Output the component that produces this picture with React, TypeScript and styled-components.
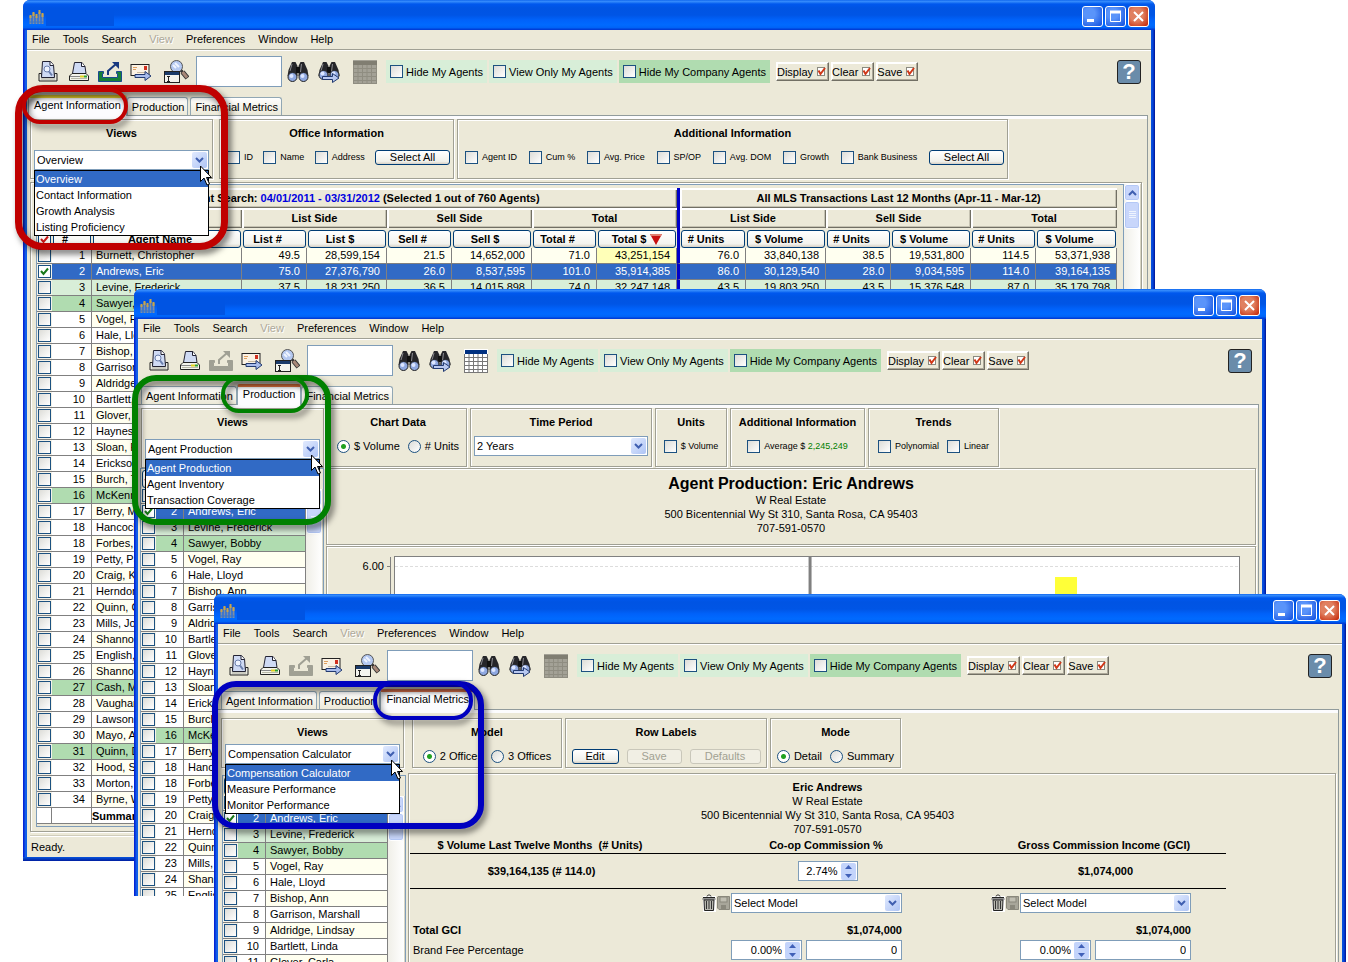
import React from "react";
import styled, { createGlobalStyle, css } from "styled-components";

const FACE = "#ece9d8";
const EDGE = "#a0a094";
const FIELD = "#7f9db9";
const PICK = "#316ac5";

const GlobalStyle = createGlobalStyle`
  * { box-sizing: border-box; }
  body {
    margin: 0;
    background: #fff;
    color: #000;
    font: 11px/14px "Liberation Sans", Arial, sans-serif;
  }
  button, input, select { font: inherit; color: inherit; margin: 0; }
  ul { list-style: none; margin: 0; padding: 0; }
  h2, h3, p { margin: 0; font-size: 11px; }
`;

/* ---------- canvas, windows and callouts ---------- */

const Canvas = styled.main`
  position: relative;
  height: 100vh;
  min-height: 900px;
  overflow: hidden;
`;

const Frame = styled.section<{ $x: number; $y: number; $right: number; $height?: string }>`
  position: absolute;
  left: ${(p) => p.$x}px;
  right: ${(p) => p.$right}px;
  top: ${(p) => p.$y}px;
  height: ${(p) => p.$height ?? "auto"};
  overflow: hidden;
  padding: 0 4px;
  border-radius: 7px 7px 0 0;
  background: linear-gradient(
    to right,
    #0019cf 0,
    #0831d9 1px,
    #166aee 3px,
    #0855dd 4px,
    #0855dd calc(100% - 4px),
    #0441d8 calc(100% - 2px),
    #001290 100%
  );
`;

const Client = styled.div`
  min-height: 100%;
  background: ${FACE};
`;

const BottomEdge = styled.div`
  height: 4px;
  margin: 0 -11px 0 -7px;
  background: linear-gradient(#0855dd, #001ea0);
`;

const TitleBar = styled.header`
  display: flex;
  align-items: center;
  height: 30px;
  margin: 0 -4px;
  padding: 3px 6px 0;
  background: linear-gradient(
    #0058e6 0,
    #3a8fff 1px,
    #2a82f8 2px,
    #0058ee 4px,
    #0054e3 8px,
    #0055e5 15px,
    #0062fa 20px,
    #006aff 25px,
    #0062f5 28px,
    #003dd7 29px
  );
`;

const TitleBlank = styled.span`
  width: 68px;
  height: 18px;
  margin-left: 1px;
  background: #0054e3;
`;

const Controls = styled.div`
  display: flex;
  gap: 2px;
  margin-left: auto;
`;

const ControlButton = styled.button<{ $close?: boolean }>`
  display: flex;
  width: 21px;
  height: 21px;
  padding: 0;
  border: 1px solid #fff;
  border-radius: 3px;
  background: ${(p) =>
    p.$close
      ? "radial-gradient(circle at 40% 40%, #e08060 40%, #c83010 90%)"
      : "radial-gradient(circle at 35% 35%, #5a94fa 30%, #1553e0 95%)"};
`;

const Callout = styled.div<{ $x: number; $y: number; $w: number; $h: number; $r: number; $t: number; $color: string }>`
  position: absolute;
  left: ${(p) => p.$x}px;
  top: ${(p) => p.$y}px;
  width: ${(p) => p.$w}px;
  height: ${(p) => p.$h}px;
  border: ${(p) => p.$t}px solid ${(p) => p.$color};
  border-radius: ${(p) => p.$r}px;
  filter: drop-shadow(3px 4px 3px rgba(0, 0, 0, 0.55));
  pointer-events: none;
`;

/* ---------- menu, toolbar and tabs ---------- */

const MenuBar = styled.nav`
  display: flex;
  gap: 13px;
  height: 20px;
  padding: 0 5px;
  border-bottom: 1px solid ${EDGE};
  box-shadow: 0 1px 0 #fff;
`;

const MenuItem = styled.button`
  padding: 0 0 2px;
  border: 0;
  background: none;
  &:disabled {
    color: #aca899;
    text-shadow: 1px 1px 0 #fff;
  }
`;

const Toolbar = styled.div`
  display: flex;
  align-items: center;
  height: 43px;
  padding: 0 10px 0 5px;
`;

const ToolButton = styled.button<{ $w?: number }>`
  display: flex;
  flex: none;
  align-items: center;
  justify-content: center;
  width: ${(p) => p.$w ?? 31}px;
  height: 28px;
  padding: 0;
  border: 0;
  background: none;
`;

const SearchBox = styled.input`
  width: 86px;
  height: 31px;
  border: 1px solid ${FIELD};
  background: #fff;
`;

const CheckPanel = styled.label<{ $strong?: boolean }>`
  display: flex;
  flex: none;
  align-items: center;
  gap: 3px;
  height: 23px;
  margin-right: 2px;
  padding: 0 4px;
  background: ${(p) => (p.$strong ? "#b0dcb0" : "#d8eed8")};
`;

const RaisedButton = styled.button`
  display: flex;
  flex: none;
  align-items: center;
  gap: 4px;
  height: 19px;
  margin-left: 2px;
  padding: 0 2px 0 0;
  border: 1px solid;
  border-color: #fff #716f64 #716f64 #fff;
  box-shadow: inset -1px -1px 0 #aca899, inset 1px 1px 0 #fff;
  background: ${FACE};
`;

const ButtonGroup = styled.div`
  display: flex;
  margin-left: 2px;
`;

const HelpButton = styled.button`
  width: 24px;
  height: 24px;
  margin-left: auto;
  padding: 0;
  border: 1px solid #222;
  border-radius: 3px;
  background: #6a8caa;
  color: #fff;
  font-size: 22px;
  font-weight: bold;
  line-height: 22px;
`;

const Tabs = styled.div`
  display: flex;
  align-items: flex-end;
  gap: 2px;
  height: 22px;
  padding: 0 3px;
`;

const Tab = styled.button<{ $active?: boolean; $top?: string }>`
  height: 18px;
  padding: 0 3px 0 4px;
  border: 1px solid #91a7b4;
  border-bottom: 0;
  border-radius: 3px 3px 0 0;
  background: linear-gradient(#fff, ${FACE});
  ${(p) =>
    p.$active &&
    css`
      position: relative;
      height: 21px;
      margin: 0 -2px -1px;
      padding: 0 5px 4px;
      border-top: 3px solid ${p.$top};
      background: #fcfcfe;
    `}
`;

const TabBody = styled.div`
  margin-right: 3px;
  padding: 3px 2px 0 3px;
  border: 1px solid #919b9c;
  border-width: 1px 1px 0 0;
  box-shadow: inset 0 3px 0 #fcfcfe;
`;

/* ---------- option groups ---------- */

const GroupRow = styled.div<{ $compact?: boolean }>`
  display: flex;
  gap: 3px;
  padding-top: ${(p) => (p.$compact ? 5 : 0)}px;
`;

const GroupBox = styled.fieldset<{ $w: number; $h: number; $gapAfter?: number }>`
  display: flex;
  flex: none;
  flex-direction: column;
  width: ${(p) => p.$w}px;
  height: ${(p) => p.$h}px;
  min-width: 0;
  margin: 0 ${(p) => p.$gapAfter ?? 0}px 0 0;
  padding: 6px 3px 0;
  border: 1px solid ${EDGE};
  box-shadow: 1px 1px 0 #fff, inset 1px 1px 0 #fff;
`;

const GroupTitle = styled.h3`
  text-align: center;
  line-height: 14px;
`;

const GroupContent = styled.div<{ $top: number; $spread?: boolean; $small?: boolean }>`
  display: flex;
  align-items: center;
  justify-content: ${(p) => (p.$spread ? "space-between" : "center")};
  gap: ${(p) => (p.$spread ? 0 : 8)}px;
  height: 20px;
  margin-top: ${(p) => p.$top}px;
  padding-left: ${(p) => (p.$spread ? 4 : 0)}px;
  font-size: ${(p) => (p.$small ? 9 : 11)}px;
  white-space: nowrap;
`;

const Choice = styled.label`
  display: flex;
  align-items: center;
  gap: 4px;
`;

const Green = styled.span`
  color: #008000;
`;

const CheckInput = styled.input.attrs({ type: "checkbox" })`
  appearance: none;
  display: block;
  flex: none;
  width: 13px;
  height: 13px;
  border: 1px solid #1c5180;
  background: linear-gradient(135deg, #dcdcd7, #fff);
  &:checked {
    background: #fff;
  }
`;

const RadioInput = styled.input.attrs({ type: "radio" })`
  appearance: none;
  flex: none;
  width: 13px;
  height: 13px;
  border: 1px solid #1c5180;
  border-radius: 50%;
  background: linear-gradient(135deg, #dcdcd7, #fff);
  &:checked {
    background: radial-gradient(circle, #21a121 0 2px, #fff 3px);
  }
`;

const PlainButton = styled.button<{ $w: number }>`
  flex: none;
  width: ${(p) => p.$w}px;
  height: 15px;
  padding: 0;
  border: 1px solid #003c74;
  border-radius: 3px;
  background: linear-gradient(#fff, #f0f0ea 80%, #d6d0c5);
  font-size: 11px;
  line-height: 12px;
  &:disabled {
    border-color: #c9c7ba;
    color: #a1a192;
    background: #f1efe4;
  }
`;

const ComboWrap = styled.div<{ $w?: number }>`
  position: relative;
  flex: none;
  width: ${(p) => (p.$w ? p.$w + "px" : "100%")};
  height: 20px;
`;

const ComboSelect = styled.select`
  appearance: none;
  display: block;
  width: 100%;
  height: 20px;
  padding: 0 20px 0 2px;
  border: 1px solid ${FIELD};
  border-radius: 0;
  background: #fff;
`;

const ArrowBox = styled.span`
  position: absolute;
  top: 2px;
  right: 2px;
  display: flex;
  align-items: center;
  justify-content: center;
  width: 15px;
  height: 16px;
  border-radius: 2px;
  background: linear-gradient(135deg, #e1eafe, #aec4f5);
  pointer-events: none;
`;

const Popup = styled.ul`
  position: absolute;
  z-index: 3;
  top: 20px;
  left: 0;
  right: 0;
  border: 1px solid #000;
  background: #fff;
`;

const PopupItem = styled.li<{ $on?: boolean }>`
  height: 16px;
  padding-left: 1px;
  line-height: 16px;
  color: ${(p) => (p.$on ? "#fff" : "#000")};
  background: ${(p) => (p.$on ? PICK : "#fff")};
`;

const Pointer = styled.svg`
  position: absolute;
  z-index: 4;
  right: -3px;
  top: 15px;
`;

/* ---------- tables ---------- */

const TableSection = styled.div`
  padding-top: 3px;
`;

const Pane = styled.div`
  margin-right: 3px;
  padding: 1px 0 4px 5px;
  border: 1px solid ${EDGE};
  box-shadow: 1px 1px 0 #fff, inset 1px 1px 0 #fff;
`;

const PaneInner = styled.div`
  display: flex;
`;

const TableFrame = styled.div`
  flex: 1;
  min-width: 0;
  overflow: hidden;
  padding: 3px 0 2px;
  border: 1px solid ${FIELD};
`;

const Grid = styled.table<{ $w: number }>`
  width: ${(p) => p.$w}px;
  table-layout: fixed;
  border-collapse: separate;
  border-spacing: 0;
`;

const dividerRule = css`
  border-left: 3px solid #0000c8;
`;

const BandHead = styled.th<{ $divider?: boolean }>`
  height: 20px;
  padding: 0;
  box-shadow: inset 2px 2px 0 #fff, inset -1px -1px 0 #716f64, inset -2px -2px 0 #c5c2b2;
  ${(p) => p.$divider && dividerRule}
`;

const DateRange = styled.span`
  color: #0000e0;
`;

const ColumnHead = styled.th<{ $divider?: boolean; $thin?: boolean }>`
  height: ${(p) => (p.$thin ? 19 : 20)}px;
  padding: ${(p) => (p.$thin ? 1 : 2)}px 1px 0;
  ${(p) => p.$divider && dividerRule}
`;

const SortButton = styled.button<{ $tight?: boolean }>`
  display: flex;
  align-items: center;
  justify-content: center;
  gap: 4px;
  width: 100%;
  height: 18px;
  padding: 0 ${(p) => (p.$tight ? 0 : 14)}px 0 0;
  border: 1px solid #003c74;
  border-radius: 3px;
  background: linear-gradient(#fff, #f3f3ee 80%, #d6d0c5);
  font-weight: bold;
  white-space: nowrap;
`;

type Tone = "ivory" | "plain" | "mine" | "company" | "picked";
const toneColor: Record<Tone, string> = {
  ivory: "#fffff0",
  plain: "#ffffff",
  mine: "#d8eed8",
  company: "#b0dcb0",
  picked: PICK,
};

const Row = styled.tr<{ $tone: Tone }>`
  background: ${(p) => toneColor[p.$tone]};
  color: ${(p) => (p.$tone === "picked" ? "#fff" : "#000")};
`;

const Cell = styled.td<{ $num?: boolean; $divider?: boolean; $fill?: string }>`
  height: 16px;
  padding: ${(p) => (p.$num ? "0 6px 0 0" : "0 0 0 4px")};
  border-right: 1px solid #808080;
  border-bottom: 1px solid #808080;
  line-height: 15px;
  text-align: ${(p) => (p.$num ? "right" : "left")};
  white-space: nowrap;
  overflow: hidden;
  background: ${(p) => p.$fill ?? "transparent"};
  ${(p) => p.$divider && dividerRule}
`;

const CheckCell = styled.td`
  height: 16px;
  padding: 0 0 0 1px;
  border-bottom: 1px solid #808080;
  background: #f4f2e8;
`;

const CheckMark = styled.svg`
  position: absolute;
  left: 2px;
  top: 2px;
  pointer-events: none;
`;

const CheckHolder = styled.div`
  position: relative;
  width: 13px;
`;

const SummaryCell = styled.td`
  height: 16px;
  padding: 0;
  border-right: 1px solid #808080;
  border-bottom: 1px solid #808080;
  background: #fff;
  font-weight: bold;
`;

const ScrollTrack = styled.div<{ $top?: number }>`
  display: flex;
  flex: none;
  flex-direction: column;
  width: 17px;
  margin-top: ${(p) => p.$top ?? 0}px;
  border-right: 1px solid #d8d5c4;
  background: linear-gradient(to right, #f0efe8, #fff);
`;

const ScrollUp = styled.button`
  display: flex;
  align-items: center;
  justify-content: center;
  width: 16px;
  height: 17px;
  padding: 0;
  border: 1px solid #fff;
  border-radius: 3px;
  background: #c8d6fb;
  box-shadow: inset 0 0 0 1px #b4c8f6;
`;

const ScrollThumb = styled.div`
  display: flex;
  align-items: center;
  justify-content: center;
  width: 16px;
  height: 28px;
  border: 1px solid #fff;
  border-radius: 3px;
  background: #c8d6fb;
  box-shadow: inset 0 0 0 1px #b4c8f6;
`;

const StatusBar = styled.footer`
  height: 22px;
  margin-top: 3px;
  padding: 4px 1px 0;
  border-top: 1px solid #d0cdbc;
  box-shadow: inset 0 1px 0 #fff;
`;

/* ---------- lower halves of the Production and Metrics windows ---------- */

const Split = styled.div<{ $top: number }>`
  display: flex;
  align-items: stretch;
  margin-top: ${(p) => p.$top}px;
`;

const ListFrame = styled.div<{ $inset?: boolean }>`
  display: flex;
  flex: none;
  width: 184px;
  margin: ${(p) => (p.$inset ? "2px 0 0 1px" : "0 0 0 -1px")};
  border: 1px solid ${FIELD};
  border-bottom: 0;
`;

const ListTableBox = styled.div`
  flex: 1;
`;

const RightColumn = styled.div`
  flex: 1;
  min-width: 0;
  margin-left: 2px;
`;

const EtchedBox = styled.div`
  border: 1px solid ${EDGE};
  box-shadow: 1px 1px 0 #fff, inset 1px 1px 0 #fff;
  & + & {
    margin-top: 1px;
  }
`;

const AgentHeading = styled.div`
  height: 75px;
  padding-top: 6px;
  text-align: center;
`;

const ChartTitle = styled.h2`
  font-size: 16px;
  line-height: 18px;
`;

const ChartArea = styled.div`
  display: flex;
  height: 420px;
  padding: 9px 15px 0 0;
`;

const AxisLabel = styled.div`
  width: 57px;
  padding-top: 3px;
  text-align: right;
`;

const AxisLine = styled.div`
  width: 4px;
  margin: 1px 3px 0 3px;
  border-right: 1px solid #808080;
  background: linear-gradient(#808080, #808080) 0 9px / 4px 1px no-repeat;
`;

const Plot = styled.svg`
  flex: 1;
  min-width: 0;
  height: 100%;
  border: 1px solid #808080;
  background: #fff;
`;

const MetricsBox = styled(EtchedBox)`
  height: 420px;
  padding: 6px 0 0 1px;
`;

const Metrics = styled.table`
  width: 816px;
  table-layout: fixed;
  border-collapse: separate;
  border-spacing: 0;
`;

const MetricCell = styled.td<{ $h: number; $ruled?: boolean; $align?: string; $padRight?: number; $padTop?: number }>`
  height: ${(p) => p.$h}px;
  padding: ${(p) => p.$padTop ?? 0}px ${(p) => p.$padRight ?? 0}px 0 3px;
  border-bottom: ${(p) => (p.$ruled ? "1px solid #000" : "0")};
  text-align: ${(p) => p.$align ?? "left"};
  white-space: pre;
`;

const MetricHead = styled.th`
  height: 18px;
  padding: 1px 0 0;
  border-bottom: 1px solid #000;
  white-space: pre;
`;

const Fields = styled.div<{ $gap?: number }>`
  display: flex;
  align-items: center;
  justify-content: flex-end;
  gap: ${(p) => p.$gap ?? 1}px;
`;

const SpinBox = styled.div<{ $w: number }>`
  display: flex;
  align-items: center;
  width: ${(p) => p.$w}px;
  height: 20px;
  padding-right: 1px;
  border: 1px solid ${FIELD};
  background: #fff;
`;

const SpinInput = styled.input`
  flex: 1;
  min-width: 0;
  height: 18px;
  padding: 0 3px 0 0;
  border: 0;
  background: none;
  text-align: right;
`;

const SpinArrows = styled.span`
  display: flex;
  align-items: center;
  justify-content: center;
  width: 15px;
  height: 17px;
  border-radius: 2px;
  background: #c3d4fb;
`;

const AmountInput = styled.input`
  width: 96px;
  height: 20px;
  padding: 0 4px;
  border: 1px solid ${FIELD};
  background: #fff;
  text-align: right;
`;

const Centered = styled.div`
  display: flex;
  justify-content: center;
`;

/* ---------- drawings ---------- */

const LogoIcon = () => (
  <svg width="16" height="16" viewBox="0 0 16 16">
    <path d="M1.500 15V7M4.500 15V4M7.500 15V7M10.500 15V3M13.500 15V5" stroke="#7f8ea2" strokeWidth="2" />
    <path d="M1.500 9V6M4.500 7V3M7.500 9V5M10.500 5V1M13.500 8V4" stroke="#c9a548" strokeWidth="2" />
    <path d="M0 13h15" stroke="#3d74c4" strokeWidth="1" />
  </svg>
);

const Chevron = ({ up }: { up?: boolean }) => (
  <svg width="9" height="6" viewBox="0 0 9 6">
    <path d={up ? "M1 5l3.500-3.500L8 5" : "M1 1l3.500 3.500L8 1"} fill="none" stroke="#3f5fb0" strokeWidth="2" />
  </svg>
);

const PreviewIcon = () => (
  <svg width="20" height="21" viewBox="0 0 20 21">
    <path d="M1 12.500h2.500v3h13v-3H19v7.500H1z" fill="#e8e8e0" stroke="#222" />
    <path d="M3 18h14" stroke="#b0b0a4" />
    <path d="M3.500 16.500L4.500.5h8l3 3.500 1 12.500z" fill="#cfdaf4" stroke="#223" />
    <path d="M12 .5v4h3.500" fill="#fff" stroke="#223" />
    <circle cx="9" cy="8" r="3" fill="#eef3ff" stroke="#6a7eac" />
    <path d="M11 10.500l3 4" stroke="#6a7eac" strokeWidth="2" />
  </svg>
);

const PrintIcon = () => (
  <svg width="20" height="21" viewBox="0 0 20 21">
    <path d="M3.500 12.500l2-11h7.500l3 4 1 7z" fill="#cfdaf4" stroke="#223" />
    <path d="M12.500 1.500v4H16" fill="#fff" stroke="#223" />
    <path d="M3 12.500h14l2.500 2.500v4.500H.5V15z" fill="#f4f4ec" stroke="#222" />
    <path d="M1 15.500h10" stroke="#888" />
    <path d="M2 17.500h16" stroke="#b8b8a8" />
    <path d="M11 15.500h4" stroke="#e0d020" strokeWidth="2" />
    <path d="M15 15.500h3" stroke="#30a030" strokeWidth="2" />
  </svg>
);

const ExportIcon = ({ dim }: { dim?: boolean }) => (
  <svg width="24" height="22" viewBox="0 0 24 22">
    <path
      d="M.5 10.500h5v2h-1v4h15v-4h-1v-2h5v10H.5z"
      fill={dim ? "#a0a094" : "#178038"}
      stroke={dim ? "#a0a094" : "#1a4a90"}
    />
    <path d="M10 14v-4l8-7" fill="none" stroke={dim ? "#a0a094" : "#1a3a80"} strokeWidth="2" />
    <path d="M14 1h7v7z" fill={dim ? "#a0a094" : "#1a3a80"} />
  </svg>
);

const MailIcon = () => (
  <svg width="22" height="19" viewBox="0 0 22 19">
    <rect x="1" y="2.500" width="18" height="11" fill="#fbf2e4" stroke="#222" />
    <path d="M3 5.500h4M3 7.500h3" stroke="#e0a060" />
    <path d="M7 10.500h8" stroke="#c8b8a0" />
    <rect x="14" y="4" width="3" height="4" fill="#d03020" />
    <path d="M5 12.500h10V9.500l6 4.500-6 4.500V15.500H5z" fill="#a8bcec" stroke="#223a70" />
  </svg>
);

const FindIcon = () => (
  <svg width="25" height="24" viewBox="0 0 25 24">
    <path d="M16.500 10l2.500 2.500" stroke="#333" strokeWidth="3" />
    <path d="M18.500 12l5 6" stroke="#333" strokeWidth="5" />
    <path d="M18.500 12l4.500 5.500" stroke="#a88878" strokeWidth="3" />
    <circle cx="12.500" cy="6.500" r="6" fill="#b4c8f0" stroke="#555" />
    <path d="M9 5l3 3M11 3l4 4" stroke="#eef4ff" strokeWidth="2" />
    <rect x=".5" y="11.500" width="15" height="11" fill="#f4f4ee" stroke="#222" />
    <rect x="1" y="12" width="14" height="3" fill="#1a3a6a" />
    <path d="M3 16.500h3M3 21.500h3M4.500 16.500v5" stroke="#222" />
  </svg>
);

const Binoculars = ({ arrow }: { arrow?: boolean }) => (
  <svg width="22" height="22" viewBox="0 0 22 22">
    <path d="M5 1h3.500l2 4v10H.5l1-6z" fill="#26262a" />
    <path d="M13.500 1H17l3.500 8 1 6h-10V5z" fill="#26262a" />
    <path d="M9 6h4v6H9z" fill="#111" />
    <path d="M5 3L3 10M14.500 3l-1 8" stroke="#8a8a90" />
    <circle cx="5.500" cy={arrow ? 14 : 16} r="4.500" fill="#8fa8e0" stroke="#222" />
    <circle cx="16.500" cy={arrow ? 14 : 16} r="4.500" fill="#8fa8e0" stroke="#222" />
    <circle cx="4.500" cy={arrow ? 12.500 : 15} r="2" fill="#dce6ff" />
    <circle cx="15.500" cy={arrow ? 12.500 : 15} r="2" fill="#dce6ff" />
    {arrow && <path d="M4.500 15.500h10v-3l6.500 4.500-6.500 4.500v-3h-10z" fill="#b8c8f0" stroke="#223a70" />}
  </svg>
);

const TableIcon = ({ live }: { live?: boolean }) => (
  <svg width="24" height="24" viewBox="0 0 24 24">
    <rect width="24" height="24" fill={live ? "#fff" : "#a3a196"} />
    <path
      d="M.5 5v18.500M5 5v19M9.500 5v19M14 5v19M18.500 5v19M23.500 5v19M0 8.500h24M0 12.500h24M0 16.500h24M0 20.500h24M0 23.500h24"
      stroke={live ? "#777" : "#8f8d81"}
    />
    <rect x={live ? 1 : 0} y="1" width={live ? 22 : 24} height="4" fill={live ? "#003080" : "#807e72"} />
  </svg>
);

const TickIcon = () => (
  <svg width="9" height="9" viewBox="0 0 9 9">
    <rect x=".5" y=".5" width="7" height="8" fill="#fff" stroke="#8a8a80" />
    <path d="M1.500 3.500L3.500 7l4.500-6" fill="none" stroke="#d03818" strokeWidth="2" />
  </svg>
);

const SmallTick = ({ color }: { color: string }) => (
  <svg width="9" height="9" viewBox="0 0 9 9">
    <path d="M1 4l2.500 3L8 1.500" fill="none" stroke={color} strokeWidth="2" />
  </svg>
);

const TrashIcon = () => (
  <svg width="14" height="18" viewBox="0 0 14 18">
    <rect x="1" y="2" width="13" height="16" fill="#fff" />
    <path d="M5 2.500C5 .5 9 .5 9 2.500M1 3.500h12M.5 5h13" fill="none" stroke="#222" />
    <path d="M2 6h10l-.5 10.500h-9z" fill="#b8b8b0" stroke="#222" />
    <path d="M4.500 7v8M7 7v8M9.500 7v8" stroke="#333" />
  </svg>
);

const DiskIcon = () => (
  <svg width="13" height="14" viewBox="0 0 13 14">
    <path d="M1 .5h11.500v13H2L.5 12V1z" fill="#a8a69a" stroke="#8a887c" />
    <rect x="3" y="1" width="7" height="5" fill="#c0beb2" stroke="#8a887c" />
    <rect x="4" y="9" width="5" height="4" fill="#8a887c" />
  </svg>
);

const PointerIcon = () => (
  <Pointer width="12" height="21" viewBox="0 0 12 21">
    <path d="M.5 1v15.500l3.500-3.500 3 7 2.500-1-3-6.500h5z" fill="#fff" stroke="#000" />
  </Pointer>
);

const MinIcon = () => (
  <svg width="19" height="19" viewBox="0 0 19 19">
    <path d="M4 13.500h7" stroke="#fff" strokeWidth="3" />
  </svg>
);

const MaxIcon = () => (
  <svg width="19" height="19" viewBox="0 0 19 19">
    <path d="M4.500 4.500h10v10h-10z" fill="none" stroke="#fff" />
    <path d="M4 5h11" stroke="#fff" strokeWidth="3" />
  </svg>
);

const CloseIcon = () => (
  <svg width="19" height="19" viewBox="0 0 19 19">
    <path d="M5 5l9 9M14 5l-9 9" stroke="#fff" strokeWidth="2" />
  </svg>
);

/* ---------- data ---------- */

const agents: [string, string][] = [
  ["1", "Burnett, Christopher"],
  ["2", "Andrews, Eric"],
  ["3", "Levine, Frederick"],
  ["4", "Sawyer, Bobby"],
  ["5", "Vogel, Ray"],
  ["6", "Hale, Lloyd"],
  ["7", "Bishop, Ann"],
  ["8", "Garrison, Marshall"],
  ["9", "Aldridge, Lindsay"],
  ["10", "Bartlett, Linda"],
  ["11", "Glover, Carla"],
  ["12", "Haynes, Mark"],
  ["13", "Sloan, Rita"],
  ["14", "Erickson, Paul"],
  ["15", "Burch, Tom"],
  ["16", "McKenna, Lee"],
  ["17", "Berry, Mary"],
  ["18", "Hancock, Joan"],
  ["18", "Forbes, Dale"],
  ["19", "Petty, Pam"],
  ["20", "Craig, Karl"],
  ["21", "Herndon, Kay"],
  ["22", "Quinn, Carl"],
  ["23", "Mills, Joan"],
  ["24", "Shannon, Bill"],
  ["25", "English, Ray"],
  ["26", "Shannon, Tia"],
  ["27", "Cash, Mike"],
  ["28", "Vaughan, Jo"],
  ["29", "Lawson, Ed"],
  ["30", "Mayo, Anna"],
  ["31", "Quinn, Dan"],
  ["32", "Hood, Sara"],
  ["33", "Morton, Al"],
  ["34", "Byrne, Walt"],
];

const companyRows = ["4", "16", "27", "31"];

const toneOf = (rank: string, index: number): Tone => {
  if (rank === "2") return "picked";
  if (rank === "3") return "mine";
  if (companyRows.includes(rank)) return "company";
  return index % 2 === 0 ? "ivory" : "plain";
};

const figures = [
  ["49.5", "28,599,154", "21.5", "14,652,000", "71.0", "43,251,154", "76.0", "33,840,138", "38.5", "19,531,800", "114.5", "53,371,938"],
  ["75.0", "27,376,790", "26.0", "8,537,595", "101.0", "35,914,385", "86.0", "30,129,540", "28.0", "9,034,595", "114.0", "39,164,135"],
  ["37.5", "18,231,250", "36.5", "14,015,898", "74.0", "32,247,148", "43.5", "19,803,250", "43.5", "15,376,548", "87.0", "35,179,798"],
];

const figureHeads = ["List #", "List $", "Sell #", "Sell $", "Total #", "Total $", "# Units", "$ Volume", "# Units", "$ Volume", "# Units", "$ Volume"];
const columnWidths = [15, 40, 150, 65, 80, 65, 80, 65, 80, 69, 80, 65, 80, 65, 81];

/* ---------- shared parts ---------- */

const Combo = ({ label, value, options, open, width }: { label: string; value: string; options: string[]; open?: boolean; width?: number }) => (
  <ComboWrap $w={width}>
    <ComboSelect aria-label={label} defaultValue={value}>
      {options.map((o) => (
        <option key={o}>{o}</option>
      ))}
    </ComboSelect>
    <ArrowBox>
      <Chevron />
    </ArrowBox>
    {open && (
      <>
        <Popup role="listbox" aria-label={label}>
          {options.map((o) => (
            <PopupItem key={o} role="option" aria-selected={o === value} $on={o === value}>
              {o}
            </PopupItem>
          ))}
        </Popup>
        <PointerIcon />
      </>
    )}
  </ComboWrap>
);

const Check = ({ children }: { children: React.ReactNode }) => (
  <Choice>
    <CheckInput />
    <span>{children}</span>
  </Choice>
);

const Radio = ({ name, on, children }: { name: string; on?: boolean; children: React.ReactNode }) => (
  <Choice>
    <RadioInput name={name} defaultChecked={on} />
    <span>{children}</span>
  </Choice>
);

const RowCheck = ({ rank, name }: { rank: string; name: string }) => (
  <CheckCell>
    <CheckHolder>
      <CheckInput aria-label={name} defaultChecked={rank === "2"} />
      {rank === "2" && (
        <CheckMark width="9" height="9" viewBox="0 0 9 9">
          <path d="M1 4l2.500 3L8 1.500" fill="none" stroke="#1a7a1a" strokeWidth="2" />
        </CheckMark>
      )}
    </CheckHolder>
  </CheckCell>
);

const ViewsGroup = ({ options, compact, gapAfter }: { options: string[]; compact?: boolean; gapAfter: number }) => (
  <GroupBox $w={183} $h={compact ? 50 : 60} $gapAfter={gapAfter}>
    <GroupTitle>Views</GroupTitle>
    <GroupContent $top={compact ? 5 : 10}>
      <Combo label="Views" value={options[0]} options={options} open />
    </GroupContent>
  </GroupBox>
);

const Scroller = ({ top }: { top?: number }) => (
  <ScrollTrack $top={top}>
    <ScrollUp aria-label="Scroll up">
      <Chevron up />
    </ScrollUp>
    <ScrollThumb>
      <svg width="7" height="8" viewBox="0 0 7 8">
        <path d="M0 .5h7M0 2.500h7M0 4.500h7M0 6.500h7" stroke="#eef4fe" />
      </svg>
    </ScrollThumb>
  </ScrollTrack>
);

const AgentList = ({ count, inset }: { count: number; inset?: boolean }) => (
  <ListFrame $inset={inset}>
    <ListTableBox>
      <Grid $w={165}>
        <colgroup>
          <col width="15" />
          <col width="28" />
          <col width="122" />
        </colgroup>
        <thead>
          <tr>
            <ColumnHead $thin>
              <SortButton $tight aria-label="Select">
                <SmallTick color="#c81818" />
              </SortButton>
            </ColumnHead>
            <ColumnHead $thin>
              <SortButton $tight aria-label="Rank" />
            </ColumnHead>
            <ColumnHead $thin>
              <SortButton aria-label="Agent Name" />
            </ColumnHead>
          </tr>
        </thead>
        <tbody>
          {agents.slice(0, count).map(([rank, name], i) => {
            const tone = toneOf(rank, i);
            return (
              <Row key={name} $tone={tone}>
                <RowCheck rank={rank} name={name} />
                <Cell $num $fill={tone === "ivory" ? "#fff" : undefined}>
                  {rank}
                </Cell>
                <Cell>{name}</Cell>
              </Row>
            );
          })}
        </tbody>
      </Grid>
    </ListTableBox>
    <Scroller top={20} />
  </ListFrame>
);

const tabNames = ["Agent Information", "Production", "Financial Metrics"];

const AppWindow = ({
  x,
  y,
  right,
  height,
  tab,
  tabTop,
  canExport,
  liveTable,
  children,
}: {
  x: number;
  y: number;
  right: number;
  height?: string;
  tab: number;
  tabTop: string;
  canExport?: boolean;
  liveTable?: boolean;
  children: React.ReactNode;
}) => (
  <Frame $x={x} $y={y} $right={right} $height={height}>
    <TitleBar>
      <LogoIcon />
      <TitleBlank />
      <Controls>
        <ControlButton aria-label="Minimize">
          <MinIcon />
        </ControlButton>
        <ControlButton aria-label="Maximize">
          <MaxIcon />
        </ControlButton>
        <ControlButton $close aria-label="Close">
          <CloseIcon />
        </ControlButton>
      </Controls>
    </TitleBar>
    <Client>
      <MenuBar>
        {["File", "Tools", "Search", "View", "Preferences", "Window", "Help"].map((m) => (
          <MenuItem key={m} disabled={m === "View"}>
            {m}
          </MenuItem>
        ))}
      </MenuBar>
      <Toolbar>
        <ToolButton aria-label="Print preview"><PreviewIcon /></ToolButton>
        <ToolButton aria-label="Print"><PrintIcon /></ToolButton>
        <ToolButton aria-label="Export"><ExportIcon dim={!canExport} /></ToolButton>
        <ToolButton aria-label="Mail"><MailIcon /></ToolButton>
        <ToolButton $w={40} aria-label="Look up"><FindIcon /></ToolButton>
        <SearchBox aria-label="Find" />
        <ToolButton aria-label="Find first"><Binoculars /></ToolButton>
        <ToolButton aria-label="Find next"><Binoculars arrow /></ToolButton>
        <ToolButton $w={42} aria-label="Table"><TableIcon live={liveTable} /></ToolButton>
        <CheckPanel><CheckInput />Hide My Agents</CheckPanel>
        <CheckPanel><CheckInput />View Only My Agents</CheckPanel>
        <CheckPanel $strong><CheckInput />Hide My Company Agents</CheckPanel>
        <ButtonGroup>
          {["Display", "Clear", "Save"].map((b) => (
            <RaisedButton key={b}>
              {b}
              <TickIcon />
            </RaisedButton>
          ))}
        </ButtonGroup>
        <HelpButton>?</HelpButton>
      </Toolbar>
      <Tabs role="tablist">
        {tabNames.map((t, i) => (
          <Tab key={t} role="tab" aria-selected={i === tab} $active={i === tab} $top={tabTop}>
            {t}
          </Tab>
        ))}
      </Tabs>
      <TabBody>{children}</TabBody>
    </Client>
  </Frame>
);

/* ---------- the three windows ---------- */

const AgentTable = () => (
  <Grid $w={1080}>
    <colgroup>
      {columnWidths.map((w, i) => (
        <col key={i} width={w} />
      ))}
    </colgroup>
    <thead>
      <tr>
        <BandHead colSpan={9}>
          Current Search: <DateRange>04/01/2011 - 03/31/2012</DateRange> (Selected 1 out of 760 Agents)
        </BandHead>
        <BandHead colSpan={6} $divider>
          All MLS Transactions Last 12 Months (Apr-11 - Mar-12)
        </BandHead>
      </tr>
      <tr>
        <BandHead colSpan={3} />
        <BandHead colSpan={2}>List Side</BandHead>
        <BandHead colSpan={2}>Sell Side</BandHead>
        <BandHead colSpan={2}>Total</BandHead>
        <BandHead colSpan={2} $divider>List Side</BandHead>
        <BandHead colSpan={2}>Sell Side</BandHead>
        <BandHead colSpan={2}>Total</BandHead>
      </tr>
      <tr>
        <ColumnHead>
          <SortButton $tight aria-label="Select">
            <SmallTick color="#c81818" />
          </SortButton>
        </ColumnHead>
        <ColumnHead><SortButton>#</SortButton></ColumnHead>
        <ColumnHead><SortButton>Agent Name</SortButton></ColumnHead>
        {figureHeads.map((h, i) => (
          <ColumnHead key={i} $divider={i === 6}>
            <SortButton $tight={i === 5}>
              {h}
              {i === 5 && (
                <svg width="12" height="11" viewBox="0 0 12 11">
                  <path d="M0 0h12L6 11z" fill="#c81010" />
                  <path d="M0 0h12l-1 2H1z" fill="#e08070" />
                </svg>
              )}
            </SortButton>
          </ColumnHead>
        ))}
      </tr>
    </thead>
    <tbody>
      {agents.map(([rank, name], i) => {
        const tone = toneOf(rank, i);
        return (
          <Row key={name} $tone={tone}>
            <RowCheck rank={rank} name={name} />
            <Cell $num $fill={tone === "ivory" ? "#fff" : undefined}>{rank}</Cell>
            <Cell>{name}</Cell>
            {figures[i] ? (
              figures[i].map((f, k) => (
                <Cell key={k} $num $divider={k === 6} $fill={i === 0 && k === 5 ? "#ffffb8" : undefined}>
                  {f}
                </Cell>
              ))
            ) : (
              <Cell colSpan={12} />
            )}
          </Row>
        );
      })}
      <tr>
        <SummaryCell />
        <SummaryCell />
        <SummaryCell colSpan={13}>Summary</SummaryCell>
      </tr>
    </tbody>
  </Grid>
);

const InformationWindow = () => (
  <AppWindow x={23} y={0} right={193} tab={0} tabTop="#f8e030" canExport>
    <GroupRow>
      <ViewsGroup gapAfter={3} options={["Overview", "Contact Information", "Growth Analysis", "Listing Proficiency"]} />
      <GroupBox $w={235} $h={60}>
        <GroupTitle>Office Information</GroupTitle>
        <GroupContent $top={7} $spread $small>
          <Check>ID</Check>
          <Check>Name</Check>
          <Check>Address</Check>
          <PlainButton $w={75}>Select All</PlainButton>
        </GroupContent>
      </GroupBox>
      <GroupBox $w={551} $h={60}>
        <GroupTitle>Additional Information</GroupTitle>
        <GroupContent $top={7} $spread $small>
          {["Agent ID", "Cum %", "Avg. Price", "SP/OP", "Avg. DOM", "Growth", "Bank Business"].map((c) => (
            <Check key={c}>{c}</Check>
          ))}
          <PlainButton $w={75}>Select All</PlainButton>
        </GroupContent>
      </GroupBox>
    </GroupRow>
    <TableSection>
      <Pane>
        <PaneInner>
          <TableFrame>
            <AgentTable />
          </TableFrame>
          <Scroller />
        </PaneInner>
      </Pane>
    </TableSection>
    <StatusBar>Ready.</StatusBar>
    <BottomEdge />
  </AppWindow>
);

const ProductionWindow = () => (
  <AppWindow x={134} y={289} right={82} height="607px" tab={1} tabTop="#e87840" liveTable>
    <GroupRow>
      <ViewsGroup gapAfter={2} options={["Agent Production", "Agent Inventory", "Transaction Coverage"]} />
      <GroupBox $w={138} $h={59}>
        <GroupTitle>Chart Data</GroupTitle>
        <GroupContent $top={7}>
          <Radio name="chart" on>$ Volume</Radio>
          <Radio name="chart"># Units</Radio>
        </GroupContent>
      </GroupBox>
      <GroupBox $w={182} $h={59}>
        <GroupTitle>Time Period</GroupTitle>
        <GroupContent $top={7}>
          <Combo label="Time Period" value="2 Years" options={["2 Years"]} />
        </GroupContent>
      </GroupBox>
      <GroupBox $w={72} $h={59}>
        <GroupTitle>Units</GroupTitle>
        <GroupContent $top={7} $small>
          <Check>$ Volume</Check>
        </GroupContent>
      </GroupBox>
      <GroupBox $w={135} $h={59}>
        <GroupTitle>Additional Information</GroupTitle>
        <GroupContent $top={7} $small>
          <Check>
            Average $ <Green>2,245,249</Green>
          </Check>
        </GroupContent>
      </GroupBox>
      <GroupBox $w={131} $h={59}>
        <GroupTitle>Trends</GroupTitle>
        <GroupContent $top={7} $small>
          <Check>Polynomial</Check>
          <Check>Linear</Check>
        </GroupContent>
      </GroupBox>
    </GroupRow>
    <Split $top={0}>
      <AgentList count={26} />
      <RightColumn>
        <EtchedBox>
          <AgentHeading>
            <ChartTitle>Agent Production: Eric Andrews</ChartTitle>
            <p>W Real Estate</p>
            <p>500 Bicentennial Wy St 310, Santa Rosa, CA 95403</p>
            <p>707-591-0570</p>
          </AgentHeading>
        </EtchedBox>
        <EtchedBox>
          <ChartArea>
            <AxisLabel>6.00</AxisLabel>
            <AxisLine />
            <Plot role="img" aria-label="Agent production">
              <line x1="0" x2="100%" y1="9.500" y2="9.500" stroke="#ddd" strokeDasharray="3 2" />
              <rect x="49%" y="0" width="3" height="100%" fill="#808080" />
              <rect x="78.200%" y="20" width="22" height="100%" fill="#ffff38" />
            </Plot>
          </ChartArea>
        </EtchedBox>
      </RightColumn>
    </Split>
  </AppWindow>
);

const Spinner = ({ label, value, width }: { label: string; value: string; width: number }) => (
  <SpinBox $w={width}>
    <SpinInput aria-label={label} defaultValue={value} />
    <SpinArrows>
      <svg width="7" height="13" viewBox="0 0 7 13">
        <path d="M0 4l3.500-4L7 4zM0 9h7l-3.500 4z" fill="#4060b8" />
      </svg>
    </SpinArrows>
  </SpinBox>
);

const ModelPicker = ({ label }: { label: string }) => (
  <Fields>
    <TrashIcon />
    <DiskIcon />
    <Combo label={label} value="Select Model" options={["Select Model"]} width={171} />
  </Fields>
);

const FeeFields = ({ label }: { label: string }) => (
  <Fields $gap={4}>
    <Spinner label={label + " percentage"} value="0.00%" width={71} />
    <AmountInput aria-label={label + " amount"} defaultValue="0" />
  </Fields>
);

const MetricsWindow = () => (
  <AppWindow x={214} y={594} right={2} height="calc(100% - 594px)" tab={2} tabTop="#e87850">
    <GroupRow $compact>
      <ViewsGroup compact gapAfter={5} options={["Compensation Calculator", "Measure Performance", "Monitor Performance"]} />
      <GroupBox $w={150} $h={50}>
        <GroupTitle>Model</GroupTitle>
        <GroupContent $top={7}>
          <Radio name="model" on>2 Offices</Radio>
          <Radio name="model">3 Offices</Radio>
        </GroupContent>
      </GroupBox>
      <GroupBox $w={202} $h={50}>
        <GroupTitle>Row Labels</GroupTitle>
        <GroupContent $top={7}>
          <PlainButton $w={47}>Edit</PlainButton>
          <PlainButton $w={55} disabled>Save</PlainButton>
          <PlainButton $w={71} disabled>Defaults</PlainButton>
        </GroupContent>
      </GroupBox>
      <GroupBox $w={131} $h={50}>
        <GroupTitle>Mode</GroupTitle>
        <GroupContent $top={7}>
          <Radio name="mode" on>Detail</Radio>
          <Radio name="mode">Summary</Radio>
        </GroupContent>
      </GroupBox>
    </GroupRow>
    <Split $top={5}>
      <AgentList count={12} inset />
      <RightColumn>
        <MetricsBox>
          <Metrics>
            <colgroup>
              <col width="260" />
              <col width="312" />
              <col width="244" />
            </colgroup>
            <tbody>
              <tr>
                <td />
                <MetricCell $h={56} $align="center">
                  <h2>Eric Andrews</h2>
                  <p>W Real Estate</p>
                  <p>500 Bicentennial Wy St 310, Santa Rosa, CA 95403</p>
                  <p>707-591-0570</p>
                </MetricCell>
                <td />
              </tr>
              <tr>
                <MetricHead scope="col">$ Volume Last Twelve Months  (# Units)</MetricHead>
                <MetricHead scope="col">Co-op Commission %</MetricHead>
                <MetricHead scope="col">Gross Commission Income (GCI)</MetricHead>
              </tr>
              <tr>
                <MetricCell $h={35} $ruled $align="center">
                  <b>$39,164,135 (# 114.0)</b>
                </MetricCell>
                <MetricCell $h={35} $ruled>
                  <Centered>
                    <Spinner label="Co-op Commission" value="2.74%" width={60} />
                  </Centered>
                </MetricCell>
                <MetricCell $h={35} $ruled $align="center">
                  <b>$1,074,000</b>
                </MetricCell>
              </tr>
              <tr>
                <td />
                <MetricCell $h={27} $padRight={80}><ModelPicker label="Model one" /></MetricCell>
                <MetricCell $h={27} $padRight={35}><ModelPicker label="Model two" /></MetricCell>
              </tr>
              <tr>
                <MetricCell $h={24} $padTop={4}><b>Total GCI</b></MetricCell>
                <MetricCell $h={24} $padTop={4} $align="right" $padRight={80}><b>$1,074,000</b></MetricCell>
                <MetricCell $h={24} $padTop={4} $align="right" $padRight={35}><b>$1,074,000</b></MetricCell>
              </tr>
              <tr>
                <MetricCell $h={20}>Brand Fee Percentage</MetricCell>
                <MetricCell $h={20} $padRight={80}><FeeFields label="Brand fee one" /></MetricCell>
                <MetricCell $h={20} $padRight={35}><FeeFields label="Brand fee two" /></MetricCell>
              </tr>
            </tbody>
          </Metrics>
        </MetricsBox>
      </RightColumn>
    </Split>
  </AppWindow>
);

export default function App() {
  return (
    <>
      <GlobalStyle />
      <Canvas>
        <InformationWindow />
        <Callout $x={15} $y={85} $w={213} $h={165} $r={28} $t={7} $color="#c00000" />
        <Callout $x={22} $y={88} $w={106} $h={36} $r={18} $t={4} $color="#c00000" />
        <ProductionWindow />
        <Callout $x={132} $y={375} $w={199} $h={150} $r={24} $t={6} $color="#008000" />
        <Callout $x={221} $y={376} $w={88} $h={37} $r={18} $t={4} $color="#008000" />
        <MetricsWindow />
        <Callout $x={212} $y={681} $w={272} $h={148} $r={24} $t={6} $color="#0000c0" />
        <Callout $x={373} $y={681} $w={100} $h={39} $r={19} $t={4} $color="#0000c0" />
      </Canvas>
    </>
  );
}
